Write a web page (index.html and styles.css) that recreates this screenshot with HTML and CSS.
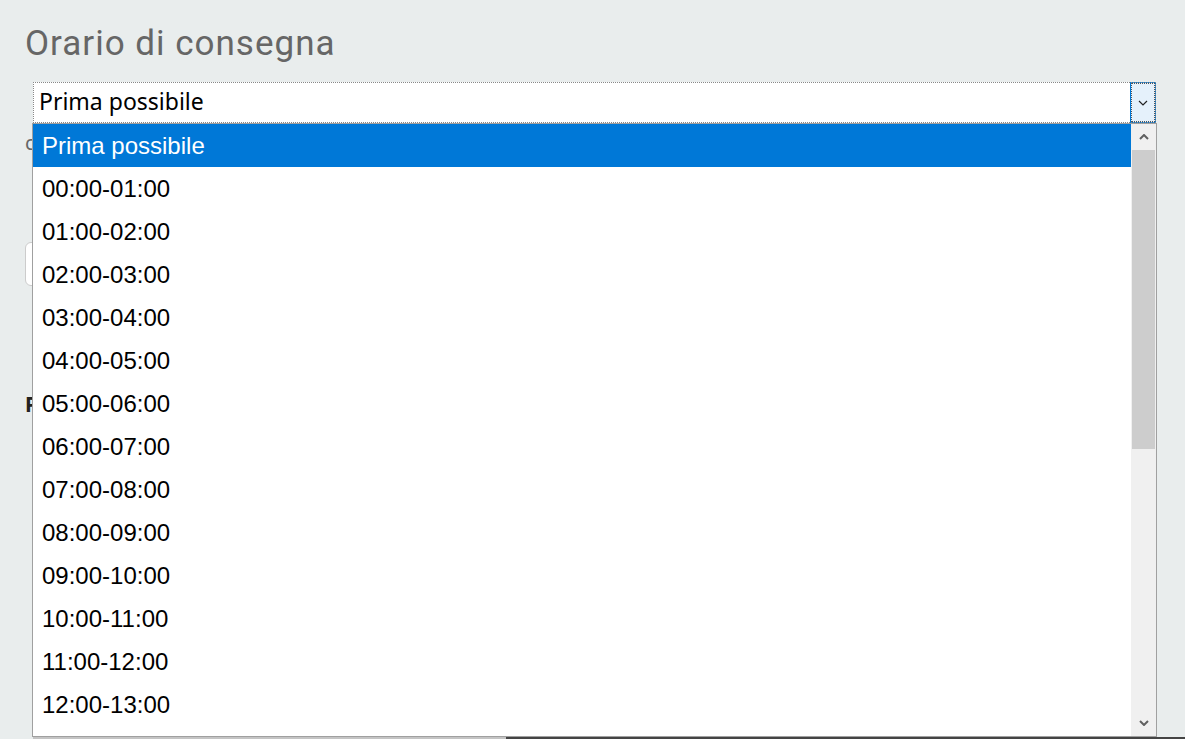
FILE: index.html
```html
<!DOCTYPE html>
<html lang="it">
<head>
    <meta charset="UTF-8">
    <meta name="viewport" content="width=device-width, initial-scale=1.0">
    <title>Orario di consegna</title>
    <link rel="stylesheet" href="styles.css">
</head>
<body>
    <div id="main-container">
        <h2 class="section-title">Orario di consegna</h2>

        <!-- Select con lista aperta -->
        <div class="select-wrap">
            <div class="select-box">
                <span class="select-value">Prima possibile</span>
                <span class="select-btn">
                    <svg width="10" height="6" viewBox="0 0 10 6"><path d="M1 1l4 4 4-4" fill="none" stroke="#222" stroke-width="1.2"/></svg>
                </span>
            </div>
            <div class="dropdown">
                <ul class="dropdown-list">
                    <li class="selected">Prima possibile</li>
                    <li>00:00-01:00</li>
                    <li>01:00-02:00</li>
                    <li>02:00-03:00</li>
                    <li>03:00-04:00</li>
                    <li>04:00-05:00</li>
                    <li>05:00-06:00</li>
                    <li>06:00-07:00</li>
                    <li>07:00-08:00</li>
                    <li>08:00-09:00</li>
                    <li>09:00-10:00</li>
                    <li>10:00-11:00</li>
                    <li>11:00-12:00</li>
                    <li>12:00-13:00</li>
                </ul>
                <div class="scrollbar">
                    <span class="scroll-arrow">
                        <svg width="10" height="6" viewBox="0 0 10 6"><path d="M1 5l4-4 4 4" fill="none" stroke="#606060" stroke-width="2"/></svg>
                    </span>
                    <div class="scroll-track"><div class="scroll-thumb"></div></div>
                    <span class="scroll-arrow">
                        <svg width="10" height="6" viewBox="0 0 10 6"><path d="M1 1l4 4 4-4" fill="none" stroke="#606060" stroke-width="2"/></svg>
                    </span>
                </div>
            </div>
        </div>

        <p class="hint">consegna</p>
        <input type="text" class="note-input" value="">
        <h3 class="sub-title">Pagamento</h3>
    </div>

    <!-- striscia in fondo -->
    <div class="bottom-strip">
        <span class="strip-light"></span>
        <span class="strip-dark"></span>
    </div>
</body>
</html>
```

FILE: styles.css
```css
body {
    margin: 0;
    padding: 0;
    background-color: #e9eded;
    font-family: "Noto Sans", Arial, sans-serif;
    height: 739px;
    overflow: hidden;
    position: relative;
}
#main-container {
    padding: 0 25px;
}
.section-title {
    margin: 0;
    padding-top: 22px;
    font-family: Roboto, "Noto Sans", sans-serif;
    font-weight: 400;
    font-size: 35px;
    line-height: 44px;
    color: #666;
    letter-spacing: 1px;
}
.select-wrap {
    position: relative;
    margin: 16px 0 0 8px;
    width: 1123px;
}
.select-box {
    display: flex;
    align-items: center;
    height: 41px;
    background: #fff;
    box-sizing: border-box;
    outline: 1px dotted #888;
    outline-offset: -1px;
}
.select-value {
    flex: 1;
    padding: 0 0 3px 6px;
    font-size: 23px;
    color: #000;
}
.select-btn {
    width: 26px;
    height: 41px;
    box-sizing: border-box;
    border: 1px solid #0078d7;
    background: #e5f1fb;
    display: flex;
    align-items: center;
    justify-content: center;
    outline: 1px dotted #555;
    outline-offset: -2px;
}
/* lista aperta sopra il contenuto */
.dropdown {
    position: absolute;
    top: 41px;
    left: -1px;
    width: 1125px;
    height: 614px;
    box-sizing: border-box;
    border: 1px solid #a0a0a0;
    background: #fff;
    display: flex;
    overflow: hidden;
    z-index: 5;
}
.dropdown-list {
    flex: 1;
    list-style: none;
    margin: 0;
    padding: 0;
    font-family: "Liberation Sans", Arial, sans-serif;
    font-size: 24px;
    color: #000;
}
.dropdown-list li {
    height: 43px;
    line-height: 43px;
    padding-left: 9px;
}
.dropdown-list li.selected {
    background: #0078d7;
    color: #fff;
}
.scrollbar {
    width: 25px;
    background: #f0f0f0;
    display: flex;
    flex-direction: column;
}
.scroll-arrow {
    height: 26px;
    display: flex;
    align-items: center;
    justify-content: center;
}
.scroll-track {
    flex: 1;
    padding: 0 1px;
}
.scroll-thumb {
    height: 299px;
    background: #cdcdcd;
}
.hint {
    margin: 6px 0 0;
    font-size: 20px;
    color: #666;
}
.note-input {
    display: block;
    margin-top: 86px;
    width: 400px;
    height: 44px;
    box-sizing: border-box;
    border: 1px solid #ccc;
    border-radius: 6px;
    background: #fff;
}
.sub-title {
    margin: 104px 0 0;
    font-size: 21px;
    font-weight: 700;
    color: #222;
}
.bottom-strip {
    position: absolute;
    left: 0;
    right: 0;
    bottom: 0;
    height: 2px;
    display: flex;
}
.strip-light {
    margin-left: 33px;
    width: 473px;
    background: #c4c4c4;
}
.strip-dark {
    flex: 1;
    background: #444;
}
```
